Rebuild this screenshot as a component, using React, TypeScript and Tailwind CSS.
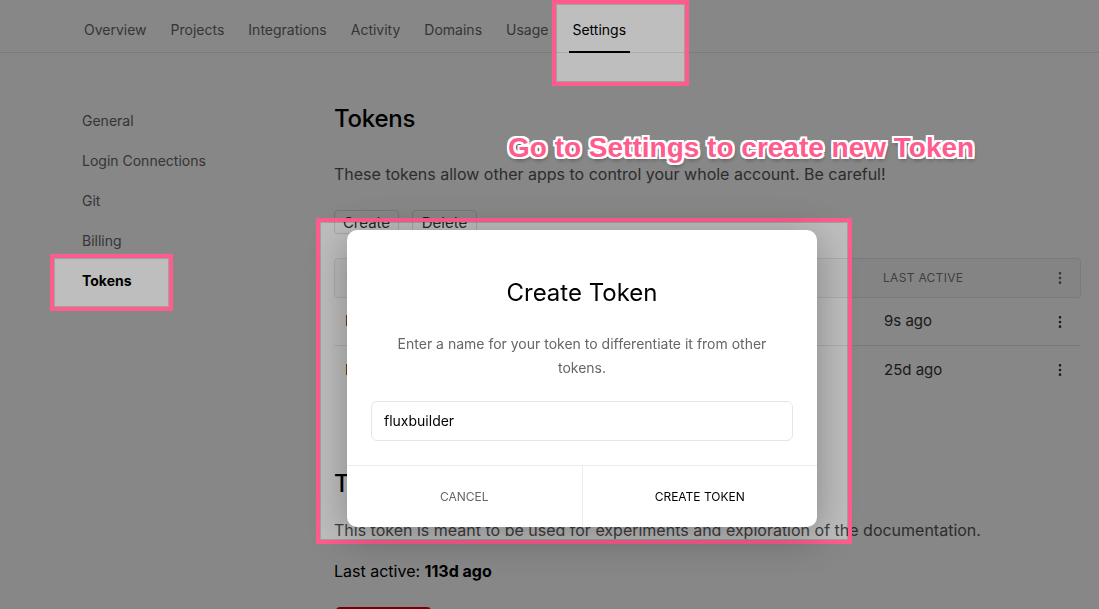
import React from 'react';
import { EllipsisVertical } from 'lucide-react';

const navItems = ['Overview', 'Projects', 'Integrations', 'Activity', 'Domains', 'Usage', 'Settings'];
const sideItems = ['General', 'Login Connections', 'Git', 'Billing', 'Tokens'];

const tokens = [
    { name: 'Default', lastActive: '9s ago' },
    { name: 'Deploy', lastActive: '25d ago' },
];

export default function App() {
    return (
        <div className="relative h-[609px] w-[1099px] overflow-hidden bg-white font-['Inter',sans-serif] text-black">
            {/* Top nav */}
            <nav className="flex h-[53px] items-start gap-6 border-b border-[#e6e6e6] pl-[84px]">
                {navItems.map((item) => (
                    <div key={item} className="relative h-full pt-[17px]">
                        <span className={`text-sm leading-5 ${item === 'Settings' ? 'text-black' : 'text-[#666]'}`}>{item}</span>
                        {item === 'Settings' && (
                            <div className="absolute -left-[3px] -right-[4px] -bottom-[1px] h-[2px] bg-black" />
                        )}
                    </div>
                ))}
            </nav>

            <div className="flex">
                {/* Sidebar */}
                <aside className="w-[334px] shrink-0 pl-[82px] pt-[48px]">
                    {sideItems.map((item) => (
                        <div
                            key={item}
                            className={`flex h-10 items-center text-sm ${item === 'Tokens' ? 'font-bold text-black' : 'text-[#666]'}`}
                        >
                            {item}
                        </div>
                    ))}
                </aside>

                {/* Main */}
                <main className="flex-1 pr-[18px] pt-[50px]">
                    <h2 className="text-2xl font-medium leading-8 tracking-[-0.01em]">Tokens</h2>
                    <p className="mt-[27px] text-base leading-6 text-[#555]">
                        These tokens allow other apps to control your whole account. Be careful!
                    </p>
                    <div className="mt-[24px] flex gap-[13px]">
                        <button className="h-6 w-[65px] rounded border border-[#ddd] text-[15px] leading-none text-[#333]">Create</button>
                        <button className="h-6 w-[65px] rounded border border-[#ddd] text-[15px] leading-none text-[#333]">Delete</button>
                    </div>

                    <div className="mt-6">
                        <div className="flex h-10 items-center rounded border border-[#e6e6e6] bg-[#fafafa]">
                            <div className="flex-1 pl-[11px] text-xs tracking-wide text-[#777]">NAME</div>
                            <div className="w-[156px] text-xs tracking-wide text-[#777]">LAST ACTIVE</div>
                            <div className="flex w-[41px] justify-center text-[#666]">
                                <EllipsisVertical size={16} strokeWidth={2} />
                            </div>
                        </div>
                        <div className="divide-y divide-[#e6e6e6]">
                            {tokens.map((t) => (
                                <div key={t.name} className="flex h-12 items-center">
                                    <div className="flex-1 pl-[11px] text-[15px] text-black">{t.name}</div>
                                    <div className="w-[156px] pl-px text-[15px] text-[#333]">{t.lastActive}</div>
                                    <div className="flex w-[42px] justify-center text-[#333]">
                                        <EllipsisVertical size={16} strokeWidth={2} />
                                    </div>
                                </div>
                            ))}
                        </div>
                    </div>

                    <h2 className="mt-[74px] text-2xl font-medium leading-8">Test Token</h2>
                    <p className="mt-[18px] text-base leading-6 text-[#555]">
                        This token is meant to be used for experiments and exploration of the documentation.
                    </p>
                    <p className="mt-[17px] text-base leading-6 text-black">
                        Last active: <span className="font-bold">113d ago</span>
                    </p>
                    <div className="ml-[2px] mt-6 h-9 w-[95px] rounded bg-[#e00000]" />
                </main>
            </div>

            {/* Dim overlay */}
            <div className="absolute inset-0 bg-black/[0.47]" />

            {/* Highlights */}
            <div className="absolute left-[552px] top-0 h-[86px] w-[137px] border-4 border-[#ff5c8e] shadow-[inset_0_0_0_1px_rgba(0,0,0,0.15)] backdrop-brightness-[1.41]" />
            <div className="absolute left-[50px] top-[254px] h-[57px] w-[123px] border-4 border-[#ff5c8e] shadow-[inset_0_0_0_1px_rgba(0,0,0,0.15)] backdrop-brightness-[1.41]" />
            <div className="absolute left-[316px] top-[218px] h-[326px] w-[536px] border-4 border-[#ff5c8e] shadow-[inset_0_0_0_1px_rgba(0,0,0,0.15)] backdrop-brightness-[1.41]" />

            {/* Annotation */}
            <div className="absolute left-[508px] top-[132px] whitespace-nowrap font-['Liberation_Sans',Arial,sans-serif] text-[28px] font-bold leading-8 text-[#ff5c8e] [text-shadow:2px_0_0_#fff,-2px_0_0_#fff,0_2px_0_#fff,0_-2px_0_#fff,2px_2px_0_#fff,-2px_-2px_0_#fff,2px_-2px_0_#fff,-2px_2px_0_#fff,1px_3px_4px_rgba(0,0,0,0.45)]">
                Go to Settings to create new Token
            </div>

            {/* Modal */}
            <div className="absolute left-[347px] top-[230px] flex h-[297px] w-[470px] flex-col overflow-hidden rounded-[10px] bg-white shadow-[0_8px_40px_rgba(0,0,0,0.3)]">
                <div className="flex flex-1 flex-col items-center px-[46px] pt-[47px]">
                    <h3 className="text-2xl leading-8 text-black">Create Token</h3>
                    <p className="mt-[23px] text-center text-sm leading-6 text-[#666]">
                        Enter a name for your token to differentiate it from other tokens.
                    </p>
                    <div className="mt-[21px] flex h-10 w-[422px] items-center rounded-md border border-[#e6e6e6] px-3 text-sm text-black">
                        fluxbuilder
                    </div>
                </div>
                <div className="flex h-[62px] border-t border-[#ebebeb]">
                    <button className="flex-1 border-r border-[#ebebeb] text-xs text-[#666]">CANCEL</button>
                    <button className="flex-1 text-xs text-black">CREATE TOKEN</button>
                </div>
            </div>
        </div>
    );
}
